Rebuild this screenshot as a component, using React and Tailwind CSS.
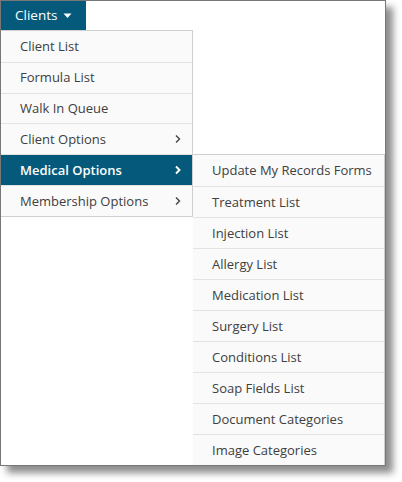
import React from "react";

const mainItems = [
  { label: "Client List" },
  { label: "Formula List" },
  { label: "Walk In Queue" },
  { label: "Client Options", sub: true },
  { label: "Medical Options", sub: true, active: true },
  { label: "Membership Options", sub: true },
];

const subItems = [
  "Update My Records Forms",
  "Treatment List",
  "Injection List",
  "Allergy List",
  "Medication List",
  "Surgery List",
  "Conditions List",
  "Soap Fields List",
  "Document Categories",
  "Image Categories",
];

function Chevron({ active }) {
  return (
    <svg width="8" height="10" viewBox="0 0 8 10" className="shrink-0">
      <path
        d="M2 1.5 L5.5 5 L2 8.5"
        fill="none"
        stroke={active ? "#ffffff" : "#444"}
        strokeWidth={active ? 1.9 : 1.4}
      />
    </svg>
  );
}

export default function App() {
  return (
    <div
      className="w-[402px] h-[482px] bg-white relative overflow-hidden"
      style={{ fontFamily: '"Open Sans", "Noto Sans", sans-serif' }}
    >
      <div className="w-[386px] h-[466px] border border-[#777] bg-white shadow-[7px_7px_7px_rgba(0,0,0,0.45)] flex flex-col">
        <div className="h-[29px] flex">
          <div className="w-[85px] h-full bg-[#055a7c] text-white text-[13.5px] flex items-center pl-[14px] gap-[6px]">
            <span>Clients</span>
            <svg width="9" height="6" viewBox="0 0 9 6">
              <path d="M0.5 0.5 L8.5 0.5 L4.5 5 Z" fill="#fff" />
            </svg>
          </div>
        </div>
        <div className="flex">
          <div className="w-[192px] h-[187px] border-t border-r border-b border-[#cfcfcf] bg-[#fafafa] flex flex-col">
            {mainItems.map((it, i) => (
              <div
                key={it.label}
                className={`h-[31px] flex items-center justify-between pl-[19px] pr-[10px] text-[13px] leading-none ${
                  i > 0 ? "border-t border-[#e3e3e3]" : ""
                } ${it.active ? "bg-[#055a7c] text-white font-semibold" : "text-[#404040]"}`}
              >
                <span>{it.label}</span>
                {it.sub && <Chevron active={it.active} />}
              </div>
            ))}
          </div>
          <div className="flex-1 pt-[124px]">
            <div className="border-t border-r border-[#cfcfcf] bg-[#fafafa] flex flex-col">
              {subItems.map((s, i) => (
                <div
                  key={s}
                  className={`h-[31px] flex items-center pl-[19px] text-[13px] leading-none text-[#404040] ${
                    i > 0 ? "border-t border-[#e3e3e3]" : ""
                  }`}
                >
                  {s}
                </div>
              ))}
            </div>
          </div>
        </div>
      </div>
    </div>
  );
}
